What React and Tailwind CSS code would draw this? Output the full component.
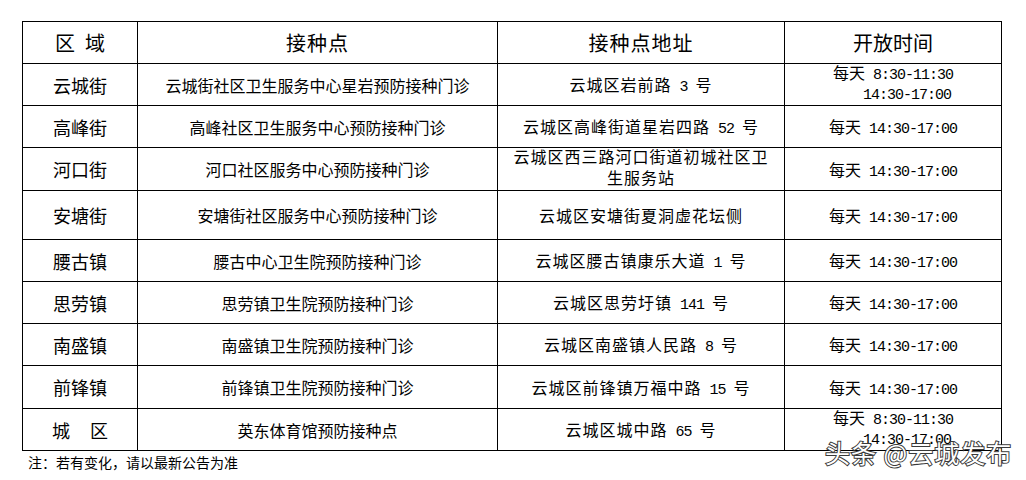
const rows = [
  { area: "云城街", site: "云城街社区卫生服务中心星岩预防接种门诊", addr: ["云城区岩前路", "3", "号"], time: "two", h: "h-[42px]" },
  { area: "高峰街", site: "高峰社区卫生服务中心预防接种门诊", addr: ["云城区高峰街道星岩四路", "52", "号"], time: "one", h: "h-[42px]" },
  { area: "河口街", site: "河口社区服务中心预防接种门诊", addr: "wrap", time: "one", h: "h-[43px]" },
  { area: "安塘街", site: "安塘街社区服务中心预防接种门诊", addr: ["云城区安塘街夏洞虚花坛侧"], time: "one", h: "h-[49px]" },
  { area: "腰古镇", site: "腰古中心卫生院预防接种门诊", addr: ["云城区腰古镇康乐大道", "1", "号"], time: "one", h: "h-[42px]" },
  { area: "思劳镇", site: "思劳镇卫生院预防接种门诊", addr: ["云城区思劳圩镇", "141", "号"], time: "one", h: "h-[42px]" },
  { area: "南盛镇", site: "南盛镇卫生院预防接种门诊", addr: ["云城区南盛镇人民路", "8", "号"], time: "one", h: "h-[42px]" },
  { area: "前锋镇", site: "前锋镇卫生院预防接种门诊", addr: ["云城区前锋镇万福中路", "15", "号"], time: "one", h: "h-[43px]" },
  { area: "城区", site: "英东体育馆预防接种点", addr: ["云城区城中路", "65", "号"], time: "two", h: "h-[42px]" },
];

function Mono({ children }) {
  return <span className="font-['Liberation_Mono',monospace] text-[15px] leading-[16px] tracking-[-1px]">{children}</span>;
}

function Address({ addr }) {
  if (addr === "wrap") {
    return (
      <div className="leading-[21px] tracking-[1px] -translate-y-[2px]">
        云城区西三路河口街道初城社区卫
        <br />
        生服务站
      </div>
    );
  }
  return (
    <div className="tracking-[1px]">
      {addr[0]}
      {addr[1] && (
        <>
          <span className="inline-block w-[8px]"></span>
          <Mono>{addr[1]}</Mono>
          <span className="inline-block w-[8px]"></span>
          {addr[2]}
        </>
      )}
    </div>
  );
}

function Time({ kind }) {
  if (kind === "two") {
    return (
      <div className="flex justify-center">
        <div className="text-left leading-[19px] -translate-y-[2px]">
          <div className="h-[20px]">
            每天<span className="inline-block w-[8px]"></span>
            <Mono>8:30-11:30</Mono>
          </div>
          <div className="h-[19px] pl-[30px]">
            <Mono>14:30-17:00</Mono>
          </div>
        </div>
      </div>
    );
  }
  return (
    <div>
      每天<span className="inline-block w-[8px]"></span>
      <Mono>14:30-17:00</Mono>
    </div>
  );
}

export default function App() {
  return (
    <div className="relative w-[1026px] h-[480px] bg-white text-black font-['Noto_Sans_CJK_SC',sans-serif]">
      <div className="pt-[21px] pl-[22px]">
        <table className="table-fixed border-collapse w-[979px] border border-black">
          <colgroup>
            <col className="w-[115px]" />
            <col className="w-[360px]" />
            <col className="w-[287px]" />
            <col className="w-[217px]" />
          </colgroup>
          <thead>
            <tr className="h-[42px] text-[20px]">
              <th className="border border-black p-0 font-normal leading-[24px]">
                <span className="inline-flex gap-[10px]">
                  <span>区</span>
                  <span>域</span>
                </span>
              </th>
              <th className="border border-black p-0 font-normal leading-[24px] tracking-[1px]">接种点</th>
              <th className="border border-black p-0 font-normal leading-[24px] tracking-[1px]">接种点地址</th>
              <th className="border border-black p-0 font-normal leading-[24px]">开放时间</th>
            </tr>
          </thead>
          <tbody className="text-[16px] leading-[22px]">
            {rows.map((r) => (
              <tr key={r.area} className={r.h}>
                <td className="border border-black p-0 text-center text-[18px]">
                  {r.area === "城区" ? (
                    <span className="inline-flex gap-[20px]">
                      <span>城</span>
                      <span>区</span>
                    </span>
                  ) : (
                    r.area
                  )}
                </td>
                <td className="border border-black p-0 text-center">{r.site}</td>
                <td className="border border-black p-0 text-center">
                  <Address addr={r.addr} />
                </td>
                <td className="border border-black p-0 text-center">
                  <Time kind={r.time} />
                </td>
              </tr>
            ))}
          </tbody>
        </table>
        <p className="mt-[1px] ml-[6px] text-[14px] leading-[20px]">注：若有变化，请以最新公告为准</p>
      </div>
      <div className="absolute left-[825px] top-[437px] text-[25px] leading-[30px] tracking-[1px] text-white [-webkit-text-stroke:2px_#3a3a3a] [paint-order:stroke_fill] whitespace-nowrap">
        头条 @云城发布
      </div>
    </div>
  );
}
